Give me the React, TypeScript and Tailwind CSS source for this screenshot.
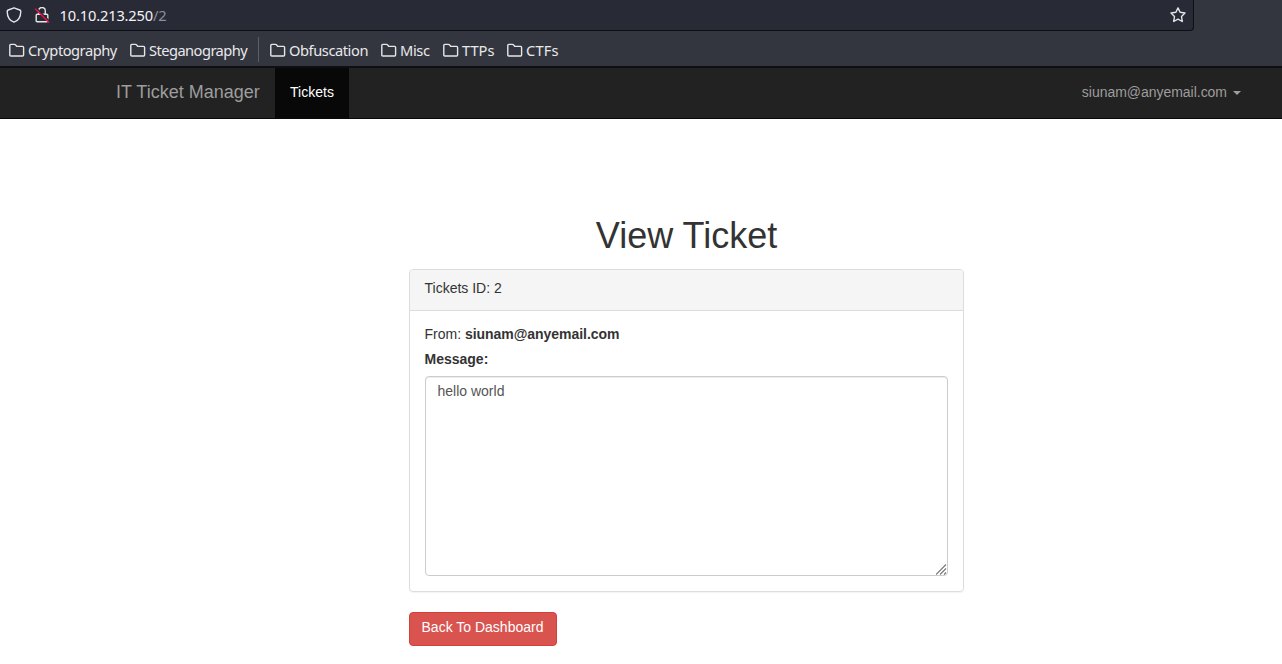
import React from "react";

function Folder() {
  return (
    <svg className="shrink-0" width="16" height="16" viewBox="0 0 16 16" fill="none" stroke="#e6e6e8" strokeWidth="1.4" strokeLinejoin="round">
      <path d="M.8 13V3.400c0-.6.4-1 1-1h3.600c.4 0 .7.1 1 .4l1.500 1.600h5.700c.6 0 1 .4 1 1V13c0 .6-.4 1-1 1H1.800c-.6 0-1-.4-1-1Z" />
    </svg>
  );
}

function Bookmark({ label, className }: { label: string; className: string }) {
  return (
    <div className={`flex shrink-0 items-center gap-[3px] ${className}`}>
      <Folder />
      <span className="whitespace-nowrap">{label}</span>
    </div>
  );
}

function Browser() {
  return (
    <header className="h-[68px] border-b-2 border-[#0d0e12] bg-[#33363e] font-['Noto_Sans',sans-serif] text-[14.67px]">
      <div className="flex h-[31px] w-[1194px] items-center rounded-br-[4px] border-r border-b border-[#0e0f14] bg-[#282a36] pr-[7px] pl-[6px]">
        <svg width="16" height="16" viewBox="0 0 16 16" fill="none" stroke="#e6e6e8" strokeWidth="1.4" strokeLinejoin="round">
          <path d="M8 .8 13.700 3c.7.3 1.100.7 1.100 1.400C14.700 9.800 12.400 13.600 8 15.200 3.600 13.600 1.300 9.800 1.200 4.400c0-.7.4-1.100 1.100-1.400Z" />
        </svg>
        <svg className="ml-[12px]" width="16" height="16" viewBox="0 0 16 16" fill="none">
          <path d="M4.700 7V3.800a3.300 3.300 0 0 1 6.600 0V7M3.200 7.200h9.600c.6 0 1 .4 1 1v5.600c0 .6-.4 1-1 1H3.200c-.6 0-1-.4-1-1V8.200c0-.6.4-1 1-1Z" stroke="#e6e6e8" strokeWidth="1.4" />
          <path d="M2.200 1 15.600 14.400" stroke="#282a36" strokeWidth="1.600" />
          <path d="M1.200 1.700 15 15.500" stroke="#ee1045" strokeWidth="1.500" />
        </svg>
        <div className="ml-[9.500px] grow tracking-[-0.16px] text-[#f4f4f6]">
          10.10.213.250<span className="text-[#8e8f96]">/2</span>
        </div>
        <svg width="16" height="16" viewBox="0 0 16 16" fill="none" stroke="#e6e6e8" strokeWidth="1.4" strokeLinejoin="round">
          <path d="m8 .9 2.100 4.400 4.900.7-3.500 3.500.8 5L8 12.200l-4.300 2.300.8-5L1 6l4.900-.7Z" />
        </svg>
      </div>
      <nav className="flex h-[35px] items-center pt-[3px] pl-[9px] text-[#e9e9ec]">
        <Bookmark label="Cryptography" className="w-[121px] tracking-[-0.48px]" />
        <Bookmark label="Steganography" className="w-[128px] tracking-[-0.55px]" />
        <div className="mr-[11px] -mt-[2px] h-[25px] w-px bg-[#5c5e65]" />
        <Bookmark label="Obfuscation" className="w-[111px] tracking-[-0.44px]" />
        <Bookmark label="Misc" className="w-[62px] tracking-[-0.35px]" />
        <Bookmark label="TTPs" className="w-[64px]" />
        <Bookmark label="CTFs" className="w-[60px] tracking-[0.15px]" />
      </nav>
    </header>
  );
}

export default function App() {
  return (
    <div className="h-[664px] overflow-hidden bg-white font-['Liberation_Sans',Arial,sans-serif] text-[14px] leading-[20px] text-[#333]">
      <Browser />
      <nav className="flex h-[51px] border-b border-[#080808] bg-[#222] pl-[116px] text-[#9d9d9d]">
        <a className="w-[159px] pt-[14px] text-[18px] whitespace-nowrap">IT Ticket Manager</a>
        <a className="w-[74px] bg-[#080808] pt-[14px] text-center text-white">Tickets</a>
        <a className="mr-[41px] ml-auto flex pt-[14px]">
          <span className="tracking-[-0.03px]">siunam@anyemail.com</span>
          <svg className="mt-[9px] ml-[6px]" width="8" height="4" viewBox="0 0 8 4" fill="currentColor">
            <path d="M0 0h8L4 4Z" />
          </svg>
        </a>
      </nav>
      <main className="ml-[409px] w-[555px] pt-[97px]">
        <h1 className="mb-[13px] text-center text-[36px] leading-[40px]">View Ticket</h1>
        <section className="h-[323px] rounded-[4px] border border-[#ddd] shadow-[0_1px_1px_rgba(0,0,0,0.05)]">
          <div className="h-[41px] rounded-t-[3px] border-b border-[#ddd] bg-[#f5f5f5] px-[14.500px] pt-[8px]">Tickets ID: 2</div>
          <div className="px-[15px] pt-[13px]">
            <p className="-ml-[0.5px]">From: <b className="tracking-[-0.04px]">siunam@anyemail.com</b></p>
            <label className="mt-[5px] mb-[7px] -ml-[0.5px] block font-bold">Message:</label>
            <div className="relative h-[200px]">
              <textarea
                defaultValue="hello world"
                className="block h-full w-full resize-none rounded-[4px] border border-[#ccc] px-[11.500px] py-[4px] text-[#555] shadow-[inset_0_1px_1px_rgba(0,0,0,0.075)] outline-none"
              />
              <svg className="absolute right-[1px] bottom-[1px]" width="11" height="11" viewBox="0 0 11 11" stroke="#777" strokeWidth="1.1">
                <path d="M0 10.500l10-10M4 10.500l6-6M8 10.500l2-2" />
              </svg>
            </div>
          </div>
        </section>
        <button className="mt-[20px] block h-[34px] w-[148px] rounded-[4px] border border-[#d43f3a] bg-[#d9534f] pr-[1px] pb-[4px] text-center text-white">
          Back To Dashboard
        </button>
      </main>
    </div>
  );
}
